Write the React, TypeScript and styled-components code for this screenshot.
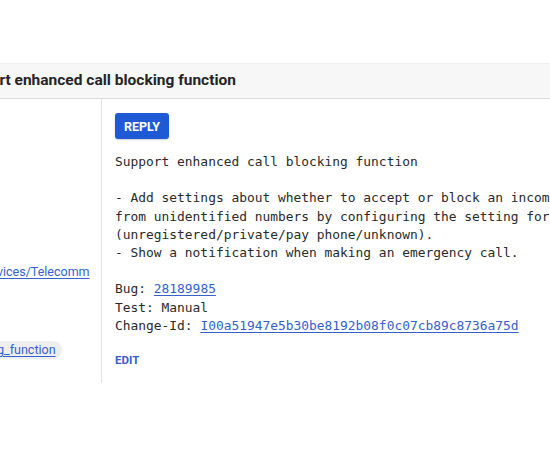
import React from "react";
import styled, { createGlobalStyle } from "styled-components";

const GlobalStyle = createGlobalStyle`
  html, body { margin: 0; padding: 0; background: #ffffff; overflow: hidden; }
  body { font-family: Roboto, "Liberation Sans", sans-serif; }
`;

const SHIFT = 140;

const Page = styled.div`
  width: calc(100% + ${SHIFT}px);
  margin-left: -${SHIFT}px;
  padding-top: 63px;
`;

const Header = styled.header`
  height: 36px;
  box-sizing: border-box;
  display: flex;
  align-items: center;
  padding-left: ${SHIFT - 45}px;
  padding-bottom: 2px;
  background: #f7f7f7;
  border-top: 1px solid #f0f0f0;
  border-bottom: 1px solid #dcdcdc;
`;

const Title = styled.h1`
  margin: 0;
  font-size: 15.5px;
  font-weight: 700;
  color: #252525;
  white-space: nowrap;
`;

const Body = styled.div`
  display: flex;
`;

const Info = styled.aside`
  width: ${SHIFT + 101}px;
  flex: none;
  box-sizing: border-box;
  padding-left: 8px;
  padding-top: 163px;
  display: flex;
  flex-direction: column;
  gap: 61px;
  font-size: 12.5px;
`;

const InfoRow = styled.div`
  height: 18px;
  display: flex;
  align-items: center;
  white-space: nowrap;
`;

const Link = styled.a`
  color: #3461cf;
  text-decoration: underline;
  text-underline-offset: 2px;
`;

const Chip = styled.span`
  background: #eeeeee;
  border-radius: 9px;
  padding: 1px 6px 1px 4px;
  line-height: 16px;
`;

const Message = styled.section`
  flex: 1;
  border-left: 1px solid #e4e4e4;
  padding: 14px 0 15px 13px;
  min-height: 0;
`;

const ReplyButton = styled.button`
  height: 26px;
  padding: 0 9px;
  border: none;
  border-radius: 3px;
  background: #1f5ad6;
  color: #ffffff;
  font-family: Roboto, "Liberation Sans", sans-serif;
  font-size: 12.5px;
  font-weight: 700;
  box-shadow: 0 1px 2px rgba(0, 0, 0, 0.2);
`;

const Pre = styled.pre`
  margin: 14px 0 0;
  font-family: "DejaVu Sans Mono", "Liberation Mono", monospace;
  font-size: 12.9px;
  line-height: 18.2px;
  color: #2a2a2a;
  white-space: pre;
`;

const EditButton = styled.button`
  margin-top: 18px;
  padding: 0;
  border: none;
  background: none;
  color: #3461cf;
  font-family: Roboto, "Liberation Sans", sans-serif;
  font-size: 11.5px;
  font-weight: 700;
`;

export default function App() {
  return (
    <>
      <GlobalStyle />
      <Page>
        <Header>
          <Title>Support enhanced call blocking function</Title>
        </Header>
        <Body>
          <Info>
            <InfoRow>
              <Link href="#">platform/packages/services/Telecomm</Link>
            </InfoRow>
            <InfoRow>
              <Chip>
                <Link href="#">enhanced_call_blocking_function</Link>
              </Chip>
            </InfoRow>
          </Info>
          <Message>
            <ReplyButton>REPLY</ReplyButton>
            <Pre>
              {"Support enhanced call blocking function\n\n- Add settings about whether to accept or block an incoming call\nfrom unidentified numbers by configuring the setting for each type\n(unregistered/private/pay phone/unknown).\n- Show a notification when making an emergency call.\n\nBug: "}
              <Link href="#">28189985</Link>
              {"\nTest: Manual\nChange-Id: "}
              <Link href="#">I00a51947e5b30be8192b08f0c07cb89c8736a75d</Link>
            </Pre>
            <EditButton>EDIT</EditButton>
          </Message>
        </Body>
      </Page>
    </>
  );
}
